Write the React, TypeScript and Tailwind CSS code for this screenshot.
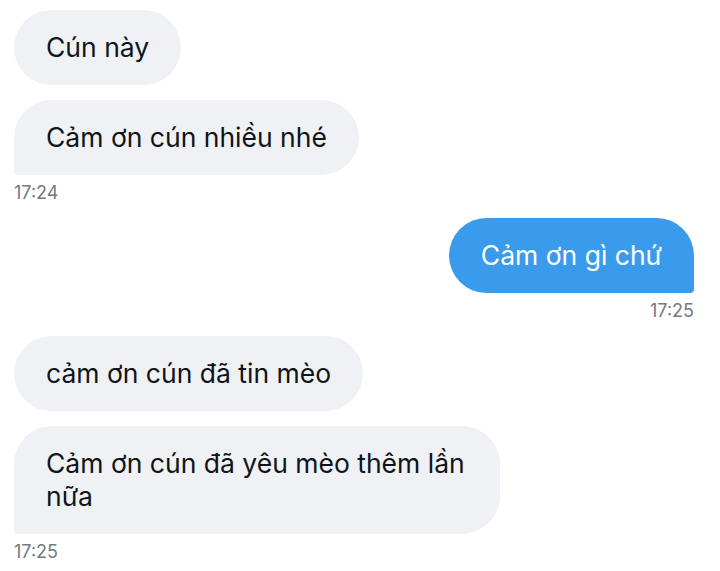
type Msg = {
  text: string
  mine?: boolean
  tail?: boolean
}

type Group = {
  messages: Msg[]
  time: string
  mine?: boolean
}

const groups: Group[] = [
  {
    messages: [{ text: 'Cún này' }, { text: 'Cảm ơn cún nhiều nhé', tail: true }],
    time: '17:24',
  },
  {
    mine: true,
    messages: [{ text: 'Cảm ơn gì chứ', tail: true }],
    time: '17:25',
  },
  {
    messages: [{ text: 'cảm ơn cún đã tin mèo' }, { text: 'Cảm ơn cún đã yêu mèo thêm lần nữa', tail: true }],
    time: '17:25',
  },
]

function Bubble({ text, mine, tail }: Msg) {
  let shape = 'rounded-[38px]'
  if (tail && mine) shape = 'rounded-[38px] rounded-br-[4px]'
  if (tail && !mine) shape = 'rounded-[38px] rounded-bl-[4px]'

  return (
    <div
      className={`max-w-[486px] px-8 py-[21px] text-[26.5px] leading-[33px] ${shape} ${
        mine ? 'bg-[#3a9bec] text-white' : 'bg-[#eff1f4] text-[#0f1419]'
      }`}
    >
      {text}
    </div>
  )
}

export default function App() {
  return (
    <div
      className="min-h-screen bg-white pl-[14px] pr-[26px] pt-[10px] pb-4"
      style={{ fontFamily: 'Inter, "Liberation Sans", Arial, sans-serif' }}
    >
      <div className="flex flex-col gap-[15px]">
        {groups.map((g, i) => (
          <div key={i} className={`flex flex-col ${g.mine ? 'items-end' : 'items-start'}`}>
            <div className={`flex flex-col gap-[15px] ${g.mine ? 'items-end' : 'items-start'}`}>
              {g.messages.map((m, j) => (
                <Bubble key={j} text={m.text} mine={g.mine} tail={m.tail} />
              ))}
            </div>
            <div className="mt-[8px] text-[18px] leading-[20px] text-[#74797e]">{g.time}</div>
          </div>
        ))}
      </div>
    </div>
  )
}
